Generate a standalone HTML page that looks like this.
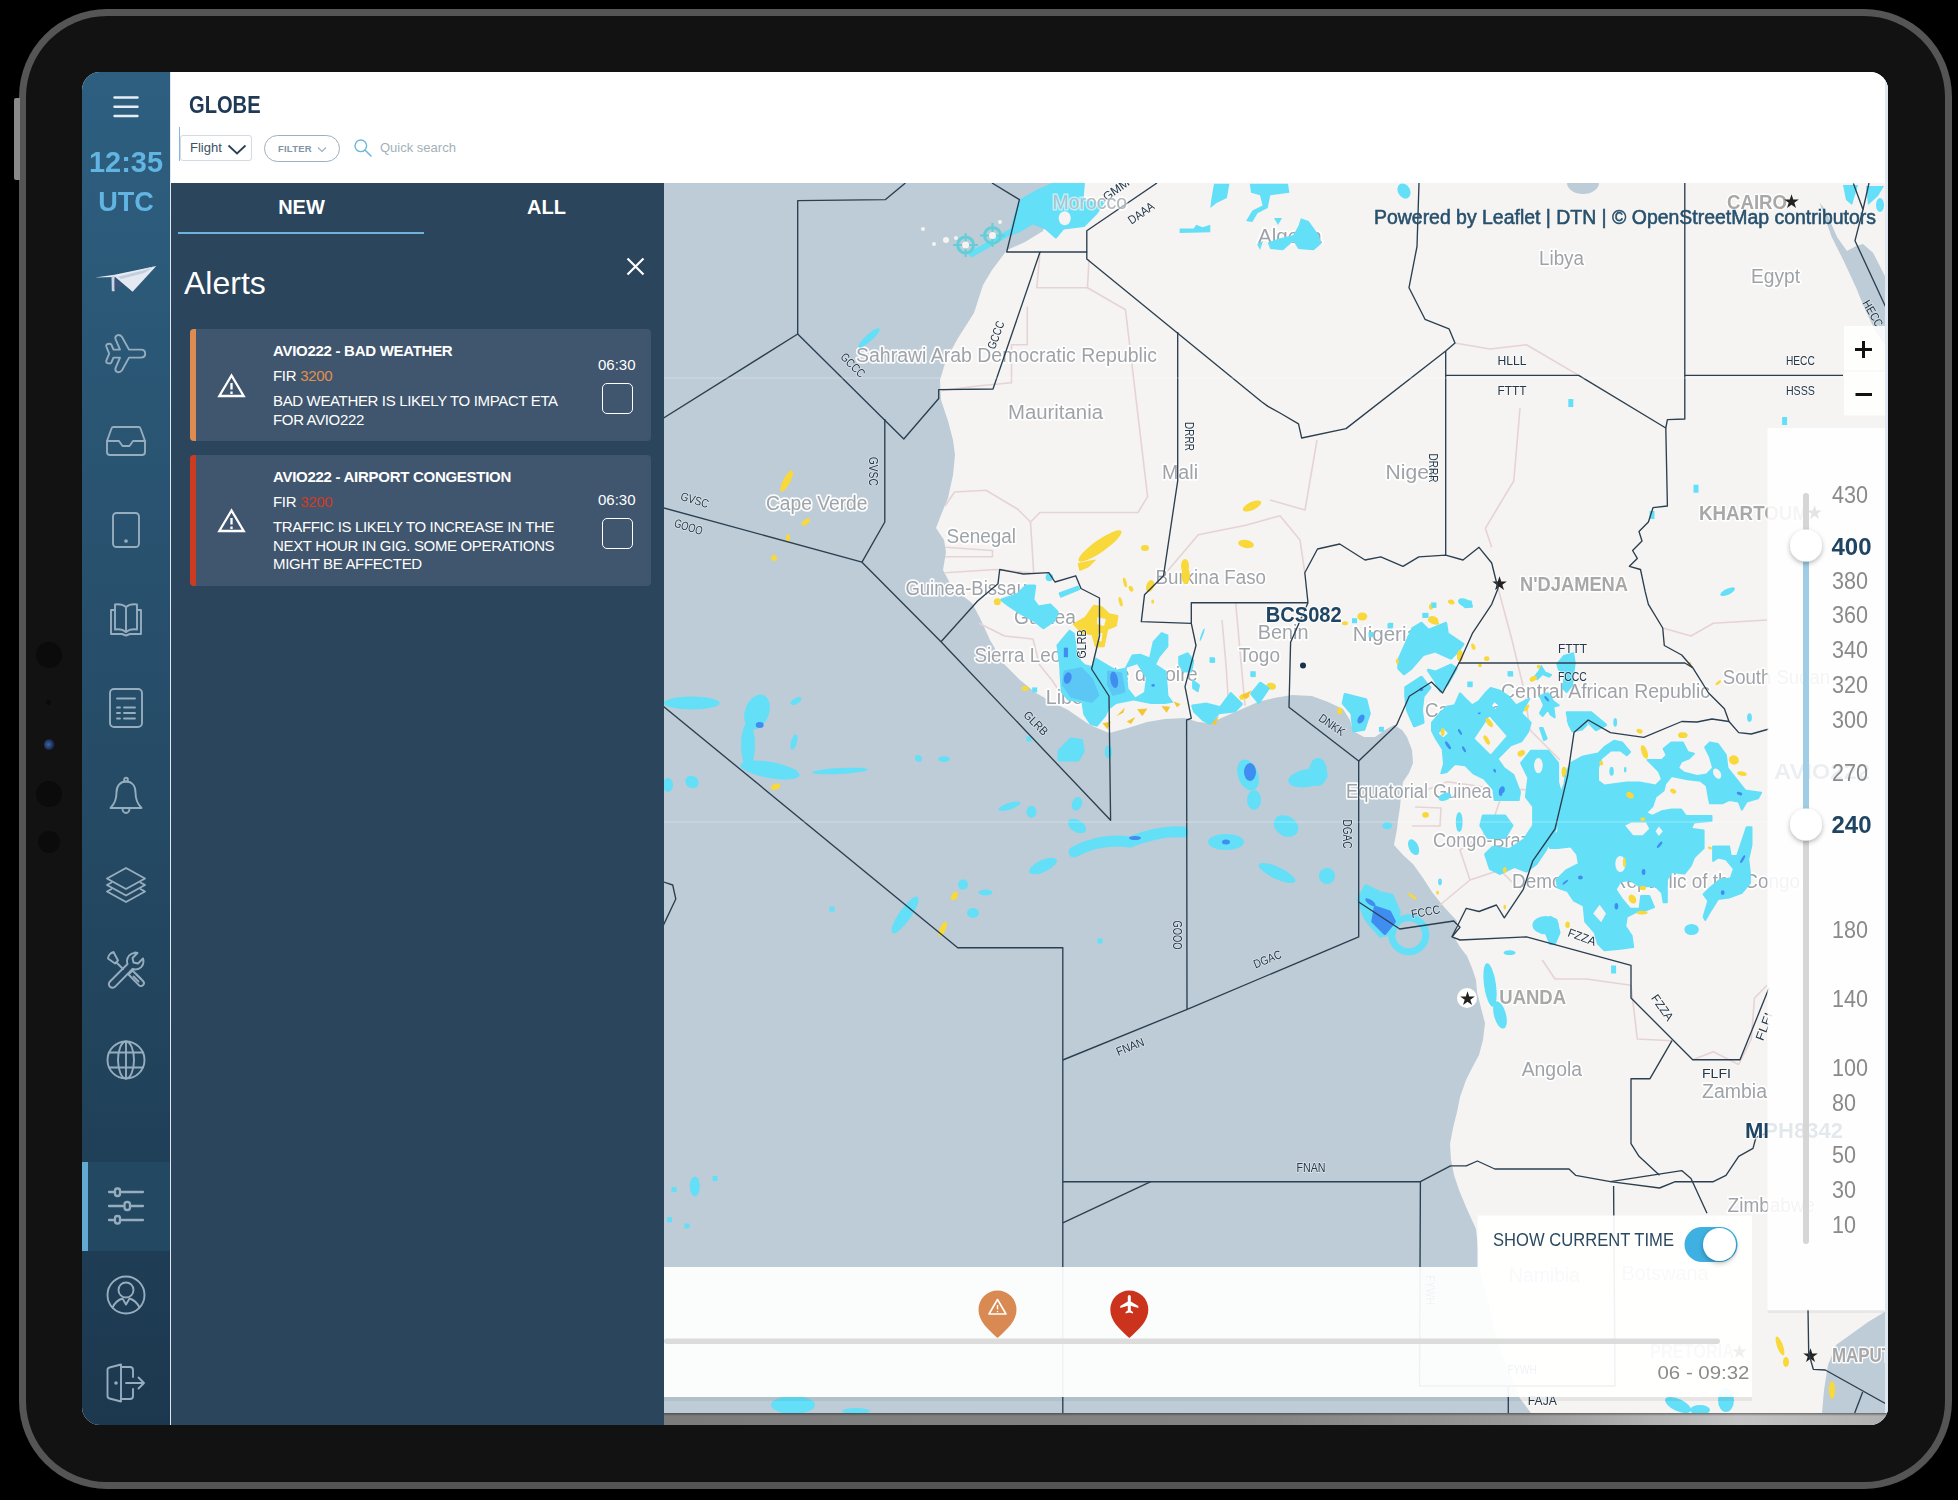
<!DOCTYPE html>
<html lang="en">
<head>
<meta charset="utf-8">
<title>Globe</title>
<style>
*{box-sizing:border-box;margin:0;padding:0}
html,body{width:1958px;height:1500px;background:#000;overflow:hidden;font-family:"Liberation Sans",sans-serif}
#ipad{position:absolute;left:19px;top:9px;width:1933px;height:1480px;border-radius:88px;background:#555}
#ipadin{position:absolute;left:7px;top:7px;right:7px;bottom:7px;border-radius:81px;background:#121212}
.btn{position:absolute;left:14px;width:6px;background:#8a8a8a;border-radius:2px 0 0 2px}
.cam{position:absolute;border-radius:50%;background:#0b0b0b}
#screen{position:absolute;left:82px;top:72px;width:1806px;height:1353px;border-radius:18px;overflow:hidden;background:#fff}
#side{position:absolute;left:0;top:0;width:88px;height:1353px;background:linear-gradient(180deg,#2e5f80 0%,#244862 60%,#1c384f 100%)}
#sideline{position:absolute;left:88px;top:0;width:1.5px;height:1353px;background:#dfe8ef}
#hdr{position:absolute;left:89px;top:0;right:0;height:111px;background:#fff}
#panel{position:absolute;left:89px;top:111px;width:493px;height:1242px;background:#2a455c}
#map{position:absolute;left:582px;top:111px;width:1224px;height:1230px;background:#bdcbd5;overflow:hidden}
#botstrip{position:absolute;left:582px;top:1341px;width:1224px;height:12px;background:linear-gradient(180deg,rgba(40,40,40,.55) 0,rgba(40,40,40,0) 3px),linear-gradient(90deg,#7c7c7c 0%,#858585 50%,#9a9a9a 70%,#c4c4c4 88%,#b0b0b0 100%)}

.ic{position:absolute;left:0;width:88px;display:block}
.ic svg{display:block;margin:0 auto;fill:none;stroke:#96adbe;stroke-width:1.9;stroke-linecap:round;stroke-linejoin:round}
.time{position:absolute;left:0;width:88px;text-align:center;color:#62b4e3;font-weight:bold}
#active{position:absolute;left:0;top:1090px;width:88px;height:89px;background:#234862}
#active:before{content:"";position:absolute;left:0;top:0;width:6px;height:89px;background:#62a9d4}

#hdr .title{position:absolute;left:18px;top:20px;font-size:23px;line-height:26px;font-weight:bold;color:#203a56;transform:scaleX(.875);transform-origin:0 0}
#flight{position:absolute;left:9px;top:63px;width:72px;height:26px;border:1px solid #d3dae0;border-radius:3px;font-size:13px;line-height:24px;color:#3c5166;padding-left:9px}
#filter{position:absolute;left:93px;top:63px;width:76px;height:27px;border:1.3px solid #9fb0bd;border-radius:14px;font-size:9.500px;line-height:25px;color:#8095a5;font-weight:bold;padding-left:13px;letter-spacing:.2px}
#qs{position:absolute;left:209px;top:67px;font-size:13px;line-height:18px;color:#a3b0ba}
#tabs div{position:absolute;top:11px;height:26px;font-size:20px;line-height:26px;font-weight:bold;color:#fff;text-align:center}
#alerts{position:absolute;left:13px;top:80px;font-size:32px;line-height:40px;color:#fff}
.card{position:absolute;left:19px;width:461px;background:#40566e;border-radius:4px;color:#fff;overflow:hidden}
.card .bar{position:absolute;left:0;top:0;bottom:0;width:6px}
.card .t{position:absolute;left:83px;top:13px;font-size:15px;line-height:18px;font-weight:bold;white-space:nowrap;letter-spacing:-0.28px}
.card .f{letter-spacing:-0.3px;position:absolute;left:83px;top:38px;font-size:15px;line-height:18px;white-space:nowrap}
.card .d{letter-spacing:-0.35px;position:absolute;left:83px;top:63px;font-size:15px;line-height:18.500px;white-space:nowrap}
.card .tm{position:absolute;left:408px;font-size:15px;line-height:18px}
.card .cb{position:absolute;left:412px;width:31px;height:31px;border:1.600px solid #fff;border-radius:5px}
</style>
</head>
<body>
<div id="ipad"><div id="ipadin"></div></div>
<div class="btn" style="top:98px;height:82px"></div>
<div class="cam" style="left:36px;top:642px;width:26px;height:26px"></div>
<div class="cam" style="left:46px;top:700px;width:5px;height:5px"></div>
<div class="cam" style="left:44px;top:739px;width:11px;height:11px;background:radial-gradient(circle at 40% 50%,#3b66a8 0%,#1c2f55 55%,#0b0b0b 80%)"></div>
<div class="cam" style="left:36px;top:781px;width:26px;height:26px"></div>
<div class="cam" style="left:38px;top:831px;width:22px;height:22px"></div>
<div id="screen">
<div id="side">
<div id="active"></div>
<svg style="position:absolute;left:31px;top:23px" width="26" height="24" viewBox="0 0 26 24"><g stroke="#e6eef4" stroke-width="2.4" stroke-linecap="round"><line x1="1.5" y1="2.5" x2="24.5" y2="2.5"/><line x1="1.5" y1="11.7" x2="24.5" y2="11.7"/><line x1="1.5" y1="21" x2="24.5" y2="21"/></g></svg>
<div class="time" style="top:73.5px;font-size:30px;line-height:32px;transform:scaleX(.965)">12:35</div>
<div class="time" style="top:112.5px;font-size:28.5px;line-height:32px;transform:scaleX(.95)">UTC</div>
<!-- paper plane logo -->
<svg style="position:absolute;left:12px;top:192px" width="64" height="32" viewBox="0 0 64 32"><polygon points="1,13.600 20.600,10.800 62.300,2 30,11.500 20.600,13" fill="#e9eef5"/><polygon points="17.500,12 20.600,11.500 20.600,27.300 17.800,27.300" fill="#c9d3e3"/><polygon points="20.600,15 30,21.500 20.600,25.500" fill="#3d557c"/><polygon points="20.600,12.600 62.300,2 38.600,27.700" fill="#e4e9f2"/><polygon points="24,12.800 58,4.200 50,9 27,15" fill="#b4c0d6" opacity=".7"/></svg>
<!-- plane -->
<div class="ic" style="top:252px"><svg width="60" height="60" viewBox="0 0 60 60"><path d="M33 25.600L26 13Q24 10.300 21 11.300Q18.800 12.500 19.500 15L24 25.600H17.500L15.500 21Q15 19.500 13 19.800L11 20.200Q9.800 21 10.300 22.500L13.200 29.600L10.300 36.700Q9.800 38.200 11 39L13 39.400Q15 39.700 15.500 38.200L17.500 33.600H24L19.500 44.200Q18.800 46.700 21 47.900Q24 48.900 26 46.200L33 33.600H45Q49.200 33.600 49.200 29.600Q49.200 25.600 45 25.600Z"/></svg></div>
<!-- inbox -->
<div class="ic" style="top:353px"><svg width="42" height="32" viewBox="0 0 42 32"><path d="M2 16l4.500-12.500c.3-.9 1-1.500 2-1.500h25c1 0 1.700.6 2 1.500L40 16v11c0 1.700-1.300 3-3 3H5c-1.700 0-3-1.300-3-3z"/><path d="M2 16h12l3.500 5h7l3.500-5h12"/></svg></div>
<!-- tablet -->
<div class="ic" style="top:439px"><svg width="30" height="38" viewBox="0 0 30 38"><rect x="2" y="2" width="26" height="34" rx="3.500"/><circle cx="15" cy="30" r="0.900" fill="#96adbe"/></svg></div>
<!-- book -->
<div class="ic" style="top:529px"><svg width="36" height="36" viewBox="0 0 36 36"><path d="M18 6c-3-2.500-7-3-11-2.500v25c4-.5 8 0 11 2.500 3-2.500 7-3 11-2.500v-25c-4-.5-8 0-11 2.500z"/><path d="M18 6v25"/><path d="M7 9H3v24h11l4 1.500 4-1.500h11V9h-4"/></svg></div>
<!-- list -->
<div class="ic" style="top:615px"><svg width="36" height="42" viewBox="0 0 36 42"><rect x="2" y="2" width="32" height="38" rx="4"/><path d="M9 11.500h18M9 20.500h3M16 20.500h11M9 26h3M16 26h11M9 31.500h3M16 31.500h11"/></svg></div>
<!-- bell -->
<div class="ic" style="top:704px"><svg width="36" height="40" viewBox="0 0 36 40"><path d="M18 5.500c-6 0-9.500 4.500-9.500 11 0 7-2 11.500-6 15.500h31c-4-4-6-8.500-6-15.500 0-6.500-3.500-11-9.500-11z"/><circle cx="18" cy="3.700" r="1.900"/><path d="M14.500 32.500c0 2.500 1.500 4.500 3.500 4.500s3.500-2 3.500-4.500"/></svg></div>
<!-- layers -->
<div class="ic" style="top:794px"><svg width="42" height="38" viewBox="0 0 42 38"><path d="M21 2L2 12.500 21 23l19-10.500z"/><path d="M6.500 16.500L2 19l19 10.500L40 19l-4.500-2.500"/><path d="M6.500 23L2 25.500 21 36l19-10.500-4.500-2.500"/></svg></div>
<!-- tools -->
<div class="ic" style="top:878px"><svg width="42" height="40" viewBox="0 0 42 40"><path d="M30 3c-4.500 0-8 3.500-8 8 0 1 .2 2 .5 3L5 31.500c-1.500 1.500-1.500 3.800 0 5.200s3.800 1.500 5.200 0L27.500 19c1 .4 2 .500 3 .500 4.500 0 8-3.500 8-8 0-1-.2-2-.5-3l-5 5-4.500-1-1-4.500 5-5c-.8-.3-1.700-.5-2.500-.5z"/><path d="M3 8.500C3 6 5.500 2.500 8.500 2l4.500 8.500-3 3z"/><path d="M11.500 12.500l6.500 6.500"/><path d="M23.500 24.500l4-4 10.500 10.500c1.200 1.200 1.200 3 0 4.200s-3 1.200-4.200 0z"/><path d="M28.500 26.500l5 5M31.500 24.500l4 4"/></svg></div>
<!-- globe -->
<div class="ic" style="top:967px"><svg width="42" height="42" viewBox="0 0 42 42"><circle cx="21" cy="21" r="18.500"/><ellipse cx="21" cy="21" rx="8" ry="18.500"/><path d="M21 2.500v37M4 13.500h34M4 28.500h34"/></svg></div>
<!-- sliders -->
<div class="ic" style="top:1114px"><svg width="38" height="40" viewBox="0 0 38 40"><g stroke-width="2.300"><path d="M2 6h5M14.500 6H36M2 20h14M24.500 20H36M2 34h5M14.500 34H36"/><rect x="8" y="2.500" width="5" height="7.500" rx="2.200"/><rect x="17.500" y="16" width="5.500" height="8" rx="2.500"/><rect x="8" y="30" width="5" height="7.500" rx="2.200"/></g></svg></div>
<!-- user -->
<div class="ic" style="top:1202px"><svg width="42" height="42" viewBox="0 0 42 42"><circle cx="21" cy="21" r="18.500"/><circle cx="21" cy="16" r="7.500"/><path d="M7.500 33.500c2.500-5 6.500-8 10-9l3.500 6 3.500-6c3.500 1 7.500 4 10 9"/></svg></div>
<!-- logout -->
<div class="ic" style="top:1290px"><svg width="42" height="42" viewBox="0 0 42 42"><path d="M16 2.500L4.500 5.500c-1.200.3-2 1.300-2 2.500v26c0 1.200.8 2.200 2 2.500L16 39.500z"/><path d="M16 5h9c1.700 0 3 1.300 3 3v7M28 27v7c0 1.700-1.300 3-3 3h-9"/><path d="M21 21h18M33.500 15.500L39 21l-5.500 5.500"/><circle cx="11" cy="21" r="0.800" fill="#96adbe"/></svg></div>
</div>
<div id="sideline"></div>
<div id="hdr">
<div class="title">GLOBE</div>
<div style="position:absolute;left:8px;top:55px;width:1px;height:34px;background:#8ab4dd"></div>
<div id="flight">Flight<svg style="position:absolute;left:46px;top:8px" width="20" height="11" viewBox="0 0 20 11"><path d="M1.500 1.500L10 9.500 18.500 1.500" fill="none" stroke="#2a4058" stroke-width="1.800"/></svg></div>
<div id="filter">FILTER<svg style="position:absolute;left:52px;top:10px" width="10" height="7" viewBox="0 0 10 7"><path d="M1 1.500L5 5.500 9 1.500" fill="none" stroke="#9fb0bd" stroke-width="1.200"/></svg></div>
<svg style="position:absolute;left:182px;top:66px" width="20" height="20" viewBox="0 0 20 20"><circle cx="7.800" cy="7.800" r="5.800" fill="none" stroke="#6fb6dc" stroke-width="1.400"/><path d="M12 12l6 6" stroke="#6fb6dc" stroke-width="1.500" stroke-linecap="round"/></svg>
<div id="qs">Quick search</div>
</div>
<div id="panel">
<div id="tabs"><div style="left:8px;width:245px">NEW</div><div style="left:253px;width:245px">ALL</div></div>
<div style="position:absolute;left:7px;top:49px;width:246px;height:2px;background:#6fb2dc"></div>
<div id="alerts">Alerts</div>
<svg style="position:absolute;left:455px;top:74px" width="19" height="19" viewBox="0 0 19 19"><path d="M1.500 1.500l16 16M17.500 1.500l-16 16" stroke="#fff" stroke-width="2.200"/></svg>
<div class="card" style="top:146px;height:112px"><div class="bar" style="background:#dc8c52"></div>
<svg style="position:absolute;left:27px;top:44px" width="29" height="25" viewBox="0 0 29 25"><path d="M14.500 2.500L2.300 23h24.400z" fill="none" stroke="#fff" stroke-width="2.300" stroke-linejoin="miter"/><path d="M14.500 10v6.500M14.500 18.500v2.500" stroke="#fff" stroke-width="2.300"/></svg>
<div class="t">AVIO222 - BAD WEATHER</div><div class="f">FIR <span style="color:#e0914f">3200</span></div><div class="d">BAD WEATHER IS LIKELY TO IMPACT ETA<br>FOR AVIO222</div>
<div class="tm" style="top:27px">06:30</div><div class="cb" style="top:54px"></div></div>
<div class="card" style="top:272px;height:131px"><div class="bar" style="background:#cc3a20"></div>
<svg style="position:absolute;left:27px;top:53px" width="29" height="25" viewBox="0 0 29 25"><path d="M14.500 2.500L2.300 23h24.400z" fill="none" stroke="#fff" stroke-width="2.300" stroke-linejoin="miter"/><path d="M14.500 10v6.500M14.500 18.500v2.500" stroke="#fff" stroke-width="2.300"/></svg>
<div class="t">AVIO222 - AIRPORT CONGESTION</div><div class="f">FIR <span style="color:#d23a22">3200</span></div><div class="d">TRAFFIC IS LIKELY TO INCREASE IN THE<br>NEXT HOUR IN GIG. SOME OPERATIONS<br>MIGHT BE AFFECTED</div>
<div class="tm" style="top:36px">06:30</div><div class="cb" style="top:63px"></div></div>
</div>
<div id="map">
<svg width="1224" height="1230" viewBox="664 183 1224 1230" style="position:absolute;left:0;top:0;display:block;filter:blur(.55px)" font-family="Liberation Sans, sans-serif">
<rect x="664" y="183" width="1224" height="1230" fill="#f5f4f2"/>
<polygon fill="#bdccd6" points="664.0,183.0 1053.0,183.0 1050.0,205.0 1043.0,231.0 1025.0,242.0 1007.0,250.0 992.0,270.0 983.0,285.0 974.0,313.0 958.0,338.0 946.0,360.0 940.0,380.0 941.0,400.0 948.0,421.0 953.0,440.0 955.0,455.0 953.0,475.0 948.0,498.0 941.0,515.0 936.0,528.0 944.0,540.0 946.0,552.0 943.0,570.0 950.0,583.0 958.0,592.0 972.0,603.0 980.0,618.0 990.0,640.0 1004.0,664.0 1020.0,680.0 1036.0,693.0 1052.0,702.0 1068.0,710.0 1090.0,725.0 1109.0,733.0 1128.0,728.0 1147.0,722.0 1165.0,719.0 1185.0,718.0 1198.0,722.0 1210.0,723.0 1226.0,716.0 1242.0,709.0 1258.0,702.0 1274.0,698.0 1292.0,695.0 1312.0,696.0 1328.0,702.0 1343.0,709.0 1350.0,720.0 1353.0,731.0 1364.0,737.0 1375.0,737.0 1385.0,730.0 1394.0,725.0 1402.0,730.0 1407.0,737.0 1412.0,750.0 1413.0,763.0 1409.0,773.0 1403.0,782.0 1401.0,795.0 1400.0,807.0 1398.0,820.0 1397.0,829.0 1394.0,845.0 1403.0,855.0 1413.0,864.0 1423.0,878.0 1432.0,892.0 1440.0,902.0 1445.0,908.0 1457.0,921.0 1454.0,937.0 1460.0,947.0 1467.0,956.0 1472.0,968.0 1476.0,980.0 1477.0,992.0 1481.0,1008.0 1485.0,1023.0 1483.0,1040.0 1479.0,1055.0 1472.0,1068.0 1466.0,1080.0 1460.0,1097.0 1457.0,1112.0 1453.0,1128.0 1450.0,1144.0 1451.0,1160.0 1454.0,1175.0 1459.0,1190.0 1466.0,1207.0 1471.0,1218.0 1476.0,1229.0 1478.0,1248.0 1479.0,1267.0 1485.0,1290.0 1492.0,1320.0 1500.0,1350.0 1510.0,1375.0 1519.0,1397.0 1531.0,1413.0 664.0,1413.0"/>
<polygon fill="#bdccd6" points="1819.6,202.5 1831.7,237.0 1844.0,261.5 1856.0,287.5 1866.0,311.7 1875.0,330.0 1888.0,350.0 1888.0,282.0 1873.0,252.8 1863.0,244.0 1856.0,246.0 1847.0,251.0 1837.0,237.0 1825.0,209.5"/>
<polygon fill="#bdccd6" points="1822.0,1413.0 1824.0,1390.0 1828.0,1365.0 1836.0,1345.0 1850.0,1335.0 1868.0,1322.0 1888.0,1310.0 1888.0,1413.0"/>
<ellipse cx="1583" cy="183" rx="16" ry="11" fill="#bdccd6"/>
<circle cx="923" cy="229" r="2" fill="#f5f4f2"/>
<circle cx="934" cy="244" r="2" fill="#f5f4f2"/>
<circle cx="946" cy="240" r="3" fill="#f5f4f2"/>
<circle cx="956" cy="238" r="2" fill="#f5f4f2"/>
<circle cx="1000" cy="222" r="2" fill="#f5f4f2"/>
<g fill="none" stroke="#e6d3d6" stroke-width="1.600" stroke-linejoin="round">
<polyline points="1040.0,252.0 1036.8,287.7 1087.5,287.7 1089.0,259.0"/>
<polyline points="1027.3,306.7 1027.3,344.7 1011.5,344.7 1011.5,382.7 979.8,385.8 941.8,390.6"/>
<polyline points="1087.5,287.7 1125.5,309.8 1147.6,496.7 1138.0,512.5 1040.0,512.5 1030.5,522.0 1017.8,509.3 986.0,490.3 954.5,492.0 945.0,506.0"/>
<polyline points="945.0,547.3 992.5,550.5 992.5,556.8 945.0,556.8"/>
<polyline points="945.0,572.7 995.7,569.5 1030.5,572.7"/>
<polyline points="1030.5,522.0 1033.7,572.7"/>
<polyline points="1163.5,575.8 1198.3,534.7 1245.8,525.2 1280.0,515.7 1300.0,540.0 1304.8,572.7"/>
<polyline points="979.0,623.3 1004.5,636.0 1033.0,639.0 1039.3,664.5 1052.0,680.3 1064.7,699.3"/>
<polyline points="1235.7,602.7 1240.4,655.0 1245.0,705.7"/>
<polyline points="1222.0,620.0 1226.0,664.5 1229.0,712.0"/>
<polyline points="1455.0,343.0 1490.0,349.0 1526.5,344.7 1578.7,375.4"/>
<polyline points="1520.0,408.0 1513.8,480.8 1485.3,528.3 1491.7,547.3"/>
<polyline points="1270.0,500.0 1305.0,510.0 1317.0,440.0"/>
<polyline points="1662.7,628.0 1691.0,636.0 1713.3,623.3 1767.0,620.0"/>
<polyline points="1415.7,794.3 1447.3,781.7 1491.7,788.0 1530.0,790.0"/>
<polyline points="1412.0,826.0 1440.0,826.0 1441.0,808.0 1415.0,807.0"/>
<polyline points="1498.0,588.0 1512.0,640.0 1524.0,690.0 1530.0,730.0 1560.0,760.0"/>
<polyline points="1542.3,960.0 1555.0,979.0 1586.6,979.0 1631.0,985.3 1637.3,1039.0 1672.0,1040.7"/>
<polyline points="1692.7,1059.7 1713.3,1051.8 1738.7,1064.5 1751.3,1039.0 1754.5,998.0 1767.0,985.3"/>
<polyline points="1440.0,905.0 1470.0,880.0 1500.0,870.0 1520.0,890.0"/>
<polyline points="1470.0,880.0 1460.0,850.0 1490.0,830.0 1500.0,800.0"/>
</g>
<g font-size="20" fill="#9fa3a8" stroke="#fff" stroke-width="3.500" stroke-linejoin="round" paint-order="stroke" stroke-opacity=".9">
<text x="1052.6" y="208.5" textLength="74.4" lengthAdjust="spacingAndGlyphs">Morocco</text>
<text x="1258.0" y="242.5" textLength="64.0" lengthAdjust="spacingAndGlyphs">Algeria</text>
<text x="1539.0" y="264.5" textLength="45.0" lengthAdjust="spacingAndGlyphs">Libya</text>
<text x="1751.0" y="282.5" textLength="49.0" lengthAdjust="spacingAndGlyphs">Egypt</text>
<text x="856.0" y="362.2" textLength="301.0" lengthAdjust="spacingAndGlyphs">Sahrawi Arab Democratic Republic</text>
<text x="1008.0" y="419.2" textLength="95.0" lengthAdjust="spacingAndGlyphs">Mauritania</text>
<text x="1162.0" y="478.5" textLength="36.0" lengthAdjust="spacingAndGlyphs">Mali</text>
<text x="1385.6" y="478.5" textLength="50.4" lengthAdjust="spacingAndGlyphs">Niger</text>
<text x="766.0" y="509.5" textLength="101.4" lengthAdjust="spacingAndGlyphs">Cape Verde</text>
<text x="946.6" y="542.5" textLength="69.4" lengthAdjust="spacingAndGlyphs">Senegal</text>
<text x="905.4" y="595.0" textLength="121.6" lengthAdjust="spacingAndGlyphs">Guinea-Bissau</text>
<text x="1155.6" y="583.9" textLength="110.4" lengthAdjust="spacingAndGlyphs">Burkina Faso</text>
<text x="1014.0" y="623.5" textLength="62.0" lengthAdjust="spacingAndGlyphs">Guinea</text>
<text x="974.4" y="661.5" textLength="107.6" lengthAdjust="spacingAndGlyphs">Sierra Leone</text>
<text x="1045.7" y="704.2" textLength="59.3" lengthAdjust="spacingAndGlyphs">Liberia</text>
<text x="1088.0" y="680.5" textLength="109.7" lengthAdjust="spacingAndGlyphs">Côte d'Ivoire</text>
<text x="1257.8" y="639.3" textLength="50.7" lengthAdjust="spacingAndGlyphs">Benin</text>
<text x="1238.8" y="661.5" textLength="41.2" lengthAdjust="spacingAndGlyphs">Togo</text>
<text x="1352.8" y="640.9" textLength="65.2" lengthAdjust="spacingAndGlyphs">Nigeria</text>
<text x="1425.0" y="716.5" textLength="87.0" lengthAdjust="spacingAndGlyphs">Cameroon</text>
<text x="1501.0" y="697.9" textLength="209.0" lengthAdjust="spacingAndGlyphs">Central African Republic</text>
<text x="1722.8" y="683.5" textLength="107.2" lengthAdjust="spacingAndGlyphs">South Sudan</text>
<text x="1346.0" y="797.5" textLength="145.7" lengthAdjust="spacingAndGlyphs">Equatorial Guinea</text>
<text x="1433.0" y="846.5" textLength="147.0" lengthAdjust="spacingAndGlyphs">Congo-Brazzaville</text>
<text x="1512.0" y="887.9" textLength="288.0" lengthAdjust="spacingAndGlyphs">Democratic Republic of the Congo</text>
<text x="1521.7" y="1075.5" textLength="60.3" lengthAdjust="spacingAndGlyphs">Angola</text>
<text x="1702.0" y="1097.9" textLength="65.0" lengthAdjust="spacingAndGlyphs">Zambia</text>
<text x="1727.6" y="1211.9" textLength="87.4" lengthAdjust="spacingAndGlyphs">Zimbabwe</text>
<text x="1509.0" y="1281.5" textLength="71.0" lengthAdjust="spacingAndGlyphs">Namibia</text>
<text x="1621.5" y="1280.0" textLength="87.1" lengthAdjust="spacingAndGlyphs">Botswana</text>
</g>
<g font-size="20" font-weight="bold" fill="#a8a8a8" stroke="#fff" stroke-width="3" stroke-linejoin="round" paint-order="stroke" stroke-opacity=".9">
<text x="1727.0" y="208.7" textLength="60.0" lengthAdjust="spacingAndGlyphs">CAIRO</text>
<text x="1699.0" y="519.5" textLength="109.0" lengthAdjust="spacingAndGlyphs">KHARTOUM</text>
<text x="1520.0" y="590.7" textLength="108.0" lengthAdjust="spacingAndGlyphs">N'DJAMENA</text>
<text x="1488.0" y="1004.4" textLength="78.0" lengthAdjust="spacingAndGlyphs">LUANDA</text>
<text x="1832.0" y="1361.7" textLength="73.0" lengthAdjust="spacingAndGlyphs">MAPUTO</text>
<text x="1650.0" y="1358.0" textLength="84.0" lengthAdjust="spacingAndGlyphs">PRETORIA</text>
</g>
<circle cx="1467" cy="998" r="10" fill="#fff"/>
<g font-size="19" fill="#222">
<text x="1791.0" y="207.5" text-anchor="middle">★</text>
<text x="1814.0" y="518.5" text-anchor="middle">★</text>
<text x="1499.6" y="590.2" text-anchor="middle">★</text>
<text x="1467.0" y="1004.5" text-anchor="middle">★</text>
<text x="1810.7" y="1361.8" text-anchor="middle">★</text>
<text x="1739.0" y="1357.5" text-anchor="middle">★</text>
</g>
<g stroke-linejoin="round">
<polygon points="1398.8,659.8 1412.7,628.6 1421.4,623.3 1428.3,630.3 1445.7,623.3 1447.4,633.8 1463.0,644.2 1457.8,651.1 1450.9,658.1 1435.3,651.1 1423.1,654.6 1410.9,668.5 1404.0,673.7 1398.8,668.5" fill="#64dff8" stroke="#64dff8" stroke-width="3"/>
<polygon points="1428.3,670.2 1435.3,672.0 1450.9,665.0 1456.1,668.5 1447.4,684.1 1440.5,691.0 1435.3,680.6 1431.8,675.4" fill="#64dff8" stroke="#64dff8" stroke-width="3"/>
<polygon points="1405.7,687.6 1421.4,677.2 1426.6,684.1 1430.0,687.6 1423.1,696.3 1421.4,710.2 1423.1,722.3 1414.4,725.8 1407.5,710.2 1405.7,696.3" fill="#64dff8" stroke="#64dff8" stroke-width="3"/>
<rect x="1352.0" y="618.2" width="5" height="5" fill="#64dff8"/>
<rect x="1387.5" y="623.5" width="5" height="5" fill="#64dff8"/>
<rect x="1368.5" y="632.1" width="5" height="5" fill="#64dff8"/>
<rect x="1431.0" y="602.5" width="5" height="5" fill="#64dff8"/>
<rect x="1422.3" y="613.0" width="5" height="5" fill="#64dff8"/>
<rect x="1209.5" y="657.3" width="5" height="5" fill="#64dff8"/>
<rect x="1250.5" y="671.2" width="5" height="5" fill="#64dff8"/>
<rect x="1467.5" y="681.5" width="5" height="5" fill="#64dff8"/>
<rect x="1507.5" y="671.2" width="5" height="5" fill="#64dff8"/>
<rect x="1378.9" y="726.8" width="5" height="5" fill="#64dff8"/>
<ellipse cx="1362.3" cy="616.4" rx="5.0" ry="4.0" fill="#f8d83a"/>
<ellipse cx="1345.0" cy="623.3" rx="3.0" ry="2.0" fill="#f8d83a"/>
<ellipse cx="1185.0" cy="566.0" rx="4.0" ry="7.0" fill="#f8d83a"/>
<ellipse cx="1450.9" cy="601.6" rx="3.0" ry="2.0" fill="#f8d83a"/>
<ellipse cx="1431.0" cy="606.8" rx="2.0" ry="3.0" fill="#f8d83a"/>
<ellipse cx="1433.5" cy="621.6" rx="6.0" ry="2.5" fill="#f8d83a" transform="rotate(20 1433.5 621.6)"/>
<ellipse cx="1272.0" cy="686.7" rx="4.0" ry="3.0" fill="#f8d83a"/>
<ellipse cx="1244.0" cy="696.0" rx="5.0" ry="2.5" fill="#f8d83a" transform="rotate(-20 1244.0 696.0)"/>
<ellipse cx="1339.7" cy="711.0" rx="2.5" ry="3.5" fill="#f8d83a"/>
<ellipse cx="1460.0" cy="655.0" rx="3.0" ry="5.0" fill="#f8d83a"/>
<path fill-rule="evenodd" fill="#64dff8" stroke="#64dff8" stroke-width="2" d="M1432.0 722.7 L1438.7 714.7 L1446.7 706.7 L1454.7 705.3 L1460.0 693.3 L1465.3 698.7 L1472.0 705.3 L1478.7 701.3 L1485.3 693.3 L1490.7 688.0 L1500.0 690.7 L1508.0 696.0 L1516.0 705.3 L1529.3 698.7 L1524.0 708.0 L1521.3 713.3 L1530.7 722.7 L1528.0 732.0 L1521.3 741.3 L1510.7 745.3 L1497.3 758.7 L1504.0 768.0 L1513.3 774.7 L1520.0 792.0 L1518.7 800.0 L1494.7 800.0 L1493.3 789.3 L1484.0 778.7 L1473.3 773.3 L1465.3 765.3 L1454.7 764.0 L1446.7 772.0 L1441.3 773.3 L1444.0 764.0 L1442.7 749.3 L1436.0 738.7 L1432.0 730.7 Z M1473.3 738.7 L1489.3 714.7 L1508.0 736.0 L1490.7 756.0 Z M1437.3 733.3 L1443.3 727.3 L1449.3 733.3 L1443.3 738.7 Z M1494.7 700.7 L1499.3 705.3 L1495.3 710.7 L1490.7 705.3 Z"/>
<polygon points="1557.3,664.0 1564.0,656.0 1573.3,653.3 1574.7,662.7 1572.0,685.3 1566.7,692.0 1562.7,688.0 1565.3,674.7 1558.7,669.3" fill="#64dff8" stroke="#64dff8" stroke-width="2"/>
<polygon points="1541.3,665.3 1545.3,672.0 1552.0,674.7 1549.3,677.3 1542.7,674.7 1537.3,680.0 1534.7,676.0 1538.7,670.7" fill="#64dff8" stroke="#64dff8" stroke-width="1"/>
<polygon points="1540.0,696.0 1548.0,693.3 1553.3,701.3 1558.7,705.3 1553.3,706.7 1554.7,717.3 1550.7,714.7 1548.0,709.3 1542.7,716.0 1540.0,713.3 1544.0,705.3" fill="#64dff8" stroke="#64dff8" stroke-width="2"/>
<polygon points="1540.0,728.0 1542.7,728.0 1546.7,738.7 1544.0,740.0" fill="#64dff8" stroke="#64dff8" stroke-width="2"/>
<polygon points="1460.7,602.7 1470.7,601.3 1472.0,606.7 1465.3,607.3" fill="#64dff8" stroke="#64dff8" stroke-width="2"/>
<rect x="1508.2" y="671.5" width="5" height="5" fill="#64dff8"/>
<rect x="1467.5" y="682.2" width="5" height="5" fill="#64dff8"/>
<rect x="1431.5" y="602.8" width="5" height="5" fill="#64dff8"/>
<rect x="1388.2" y="622.8" width="5" height="5" fill="#64dff8"/>
<rect x="1423.5" y="612.8" width="5" height="5" fill="#64dff8"/>
<ellipse cx="1433.3" cy="620.0" rx="5.3" ry="3.7" fill="#f8d83a" transform="rotate(20 1433.3 620.0)"/>
<ellipse cx="1460.0" cy="657.3" rx="2.9" ry="4.0" fill="#f8d83a"/>
<ellipse cx="1473.3" cy="646.7" rx="1.9" ry="3.3" fill="#f8d83a" transform="rotate(-20 1473.3 646.7)"/>
<ellipse cx="1486.7" cy="658.7" rx="2.7" ry="2.4" fill="#f8d83a"/>
<ellipse cx="1533.3" cy="678.7" rx="4.0" ry="2.4" fill="#f8d83a" transform="rotate(-30 1533.3 678.7)"/>
<ellipse cx="1489.3" cy="722.7" rx="2.4" ry="5.3" fill="#f8d83a" transform="rotate(-35 1489.3 722.7)"/>
<ellipse cx="1486.7" cy="740.0" rx="2.1" ry="5.3" fill="#f8d83a" transform="rotate(-30 1486.7 740.0)"/>
<ellipse cx="1442.7" cy="732.0" rx="1.9" ry="4.0" fill="#f8d83a"/>
<ellipse cx="1521.3" cy="753.3" rx="4.0" ry="2.9" fill="#f8d83a" transform="rotate(-30 1521.3 753.3)"/>
<ellipse cx="1564.0" cy="772.0" rx="2.4" ry="5.3" fill="#f8d83a"/>
<ellipse cx="1480.0" cy="665.3" rx="1.9" ry="1.9" fill="#f8d83a"/>
<ellipse cx="1538.7" cy="666.7" rx="1.9" ry="1.9" fill="#f8d83a"/>
<ellipse cx="1452.0" cy="602.7" rx="2.7" ry="1.9" fill="#f8d83a"/>
<ellipse cx="1397.3" cy="661.3" rx="1.6" ry="2.7" fill="#f8d83a"/>
<ellipse cx="1526.7" cy="708.0" rx="1.6" ry="4.0" fill="#f8d83a" transform="rotate(30 1526.7 708.0)"/>
<ellipse cx="1421.3" cy="689.3" rx="1.9" ry="1.9" fill="#3f8df0"/>
<ellipse cx="1460.0" cy="732.0" rx="1.2" ry="3.3" fill="#3f8df0" transform="rotate(-30 1460.0 732.0)"/>
<ellipse cx="1448.0" cy="745.3" rx="1.5" ry="4.7" fill="#3f8df0" transform="rotate(-35 1448.0 745.3)"/>
<ellipse cx="1464.0" cy="749.3" rx="1.2" ry="3.3" fill="#3f8df0" transform="rotate(-30 1464.0 749.3)"/>
<ellipse cx="1546.7" cy="698.7" rx="1.2" ry="3.3" fill="#3f8df0" transform="rotate(-40 1546.7 698.7)"/>
<ellipse cx="1500.7" cy="792.0" rx="1.9" ry="4.0" fill="#3f8df0"/>
<ellipse cx="1494.7" cy="770.7" rx="1.2" ry="2.0" fill="#3f8df0" transform="rotate(-30 1494.7 770.7)"/>
<ellipse cx="1479.3" cy="713.3" rx="1.6" ry="0.8" fill="#3f8df0" transform="rotate(-20 1479.3 713.3)"/>
<polygon points="1521.6,763.2 1531.2,751.2 1548.0,751.2 1557.6,763.2 1557.6,782.4 1562.4,799.2 1560.0,816.0 1552.8,835.2 1545.6,849.6 1536.0,863.9 1526.4,871.1 1514.4,866.3 1500.0,873.5 1490.4,868.7 1485.6,854.3 1492.8,847.2 1509.6,849.6 1524.0,840.0 1533.6,825.6 1533.6,806.4 1526.4,796.8 1528.8,777.6" fill="#64dff8" stroke="#64dff8" stroke-width="3"/>
<ellipse cx="1538.4" cy="765.6" rx="4.3" ry="7.7" fill="#f5f4f2"/>
<polygon points="1483.2,816.0 1504.8,816.0 1512.0,825.6 1504.8,837.6 1488.0,837.6 1480.8,825.6" fill="#64dff8" stroke="#64dff8" stroke-width="3"/>
<ellipse cx="1459.2" cy="822.0" rx="3.4" ry="10.1" fill="#64dff8"/>
<polygon points="1566.0,772.8 1570.8,763.2 1582.0,756.8 1598.0,753.6 1604.4,747.2 1614.0,740.8 1622.0,742.4 1630.0,752.0 1626.8,755.2 1620.4,750.4 1610.8,750.4 1601.2,758.4 1598.0,768.0 1598.0,780.8 1604.4,785.6 1626.8,782.4 1639.6,782.4 1655.6,785.6 1662.0,779.2 1658.8,771.2 1652.4,764.8 1647.6,760.0 1662.0,760.0 1666.8,755.2 1663.6,748.8 1671.6,742.4 1682.8,742.4 1687.6,752.0 1694.0,753.6 1689.2,758.4 1681.2,761.6 1678.0,768.0 1684.4,772.8 1697.2,776.0 1706.7,774.4 1713.1,768.0 1709.9,756.8 1705.2,747.2 1709.9,742.4 1717.9,744.0 1725.9,755.2 1727.5,768.0 1733.9,776.0 1745.1,790.4 1761.1,792.8 1757.9,798.4 1746.7,801.6 1741.9,809.6 1738.7,801.6 1729.1,800.0 1722.7,803.2 1709.9,803.2 1708.3,795.2 1706.7,785.6 1700.4,780.8 1687.6,779.2 1671.6,776.0 1665.2,784.0 1663.6,790.4 1655.6,796.8 1652.4,806.4 1646.0,812.8 1652.4,816.0 1662.0,811.2 1671.6,809.6 1681.2,809.6 1686.0,816.0 1711.5,816.0 1711.5,820.8 1694.0,822.4 1690.8,828.8 1703.6,830.4 1703.6,848.0 1694.0,857.6 1690.8,865.6 1684.4,873.6 1671.6,872.0 1666.8,879.9 1666.8,902.3 1663.6,902.3 1662.0,892.7 1655.6,886.3 1639.6,886.3 1630.0,879.9 1620.4,881.5 1615.6,889.5 1622.0,899.1 1630.0,908.7 1639.6,908.7 1641.2,895.9 1649.2,895.9 1654.0,907.1 1646.0,910.3 1636.4,911.9 1626.8,916.7 1625.2,926.3 1631.6,935.9 1633.2,947.1 1620.4,948.7 1604.4,950.3 1598.0,943.9 1594.8,932.7 1585.2,921.5 1583.6,905.5 1574.0,900.7 1567.6,891.1 1558.0,887.9 1556.4,879.9 1566.0,870.4 1578.8,864.0 1577.2,854.4 1570.8,846.4 1558.0,848.0 1550.0,848.0 1550.0,838.4 1558.0,832.0 1559.6,816.0 1558.0,800.0 1564.4,784.0" fill="#64dff8" stroke="#64dff8" stroke-width="2"/>
<polygon points="1625.2,825.6 1631.6,822.4 1646.0,822.4 1649.2,828.8 1642.8,835.2 1633.2,835.2" fill="#f5f4f2" />
<ellipse cx="1620.4" cy="864.0" rx="5.1" ry="8.0" fill="#f5f4f2"/>
<polygon points="1658.8,826.4 1662.8,831.2 1658.8,836.0 1655.6,831.2" fill="#f5f4f2" />
<polygon points="1599.6,904.7 1606.0,913.5 1601.2,922.3 1593.2,913.5" fill="#f5f4f2" />
<ellipse cx="1717.1" cy="773.6" rx="3.5" ry="5.6" fill="#f5f4f2" transform="rotate(-30 1717.1 773.6)"/>
<ellipse cx="1611.6" cy="771.2" rx="2.2" ry="4.5" fill="#64dff8"/>
<ellipse cx="1625.2" cy="769.6" rx="1.3" ry="2.9" fill="#64dff8"/>
<polygon points="1713.1,846.4 1729.1,846.4 1730.7,856.0 1737.1,856.0 1746.7,827.2 1751.5,827.2 1751.5,844.8 1748.3,859.2 1749.9,873.6 1749.9,883.1 1741.9,892.7 1729.1,897.5 1717.9,899.1 1709.9,911.9 1705.2,919.9 1703.6,916.7 1708.3,900.7 1703.6,894.3 1709.9,887.9 1719.5,879.9 1730.7,878.3 1733.9,868.8 1725.9,859.2 1717.9,857.6 1713.1,860.8" fill="#64dff8" stroke="#64dff8" stroke-width="2"/>
<ellipse cx="1691.6" cy="929.5" rx="7.2" ry="5.6" fill="#64dff8"/>
<polygon points="1550.0,916.7 1556.4,919.9 1559.6,932.7 1554.8,943.9 1550.0,943.9 1545.2,931.1" fill="#64dff8" stroke="#64dff8" stroke-width="2"/>
<polygon points="1567.6,720.0 1583.6,720.0 1586.8,724.8 1582.0,729.6 1572.4,731.2 1569.2,724.8" fill="#64dff8" stroke="#64dff8" stroke-width="2"/>
<ellipse cx="1644.4" cy="752.0" rx="2.9" ry="7.2" fill="#f8d83a" transform="rotate(-20 1644.4 752.0)"/>
<ellipse cx="1682.8" cy="735.2" rx="4.8" ry="2.9" fill="#f8d83a"/>
<ellipse cx="1733.9" cy="760.0" rx="5.1" ry="4.5" fill="#f8d83a" transform="rotate(30 1733.9 760.0)"/>
<ellipse cx="1741.9" cy="773.6" rx="4.8" ry="2.2" fill="#f8d83a" transform="rotate(10 1741.9 773.6)"/>
<ellipse cx="1673.2" cy="791.2" rx="3.2" ry="2.2" fill="#f8d83a" transform="rotate(30 1673.2 791.2)"/>
<ellipse cx="1630.0" cy="795.2" rx="4.0" ry="2.9" fill="#f8d83a" transform="rotate(30 1630.0 795.2)"/>
<ellipse cx="1632.4" cy="899.1" rx="3.5" ry="4.8" fill="#f8d83a" transform="rotate(-30 1632.4 899.1)"/>
<ellipse cx="1642.8" cy="887.9" rx="3.2" ry="2.2" fill="#f8d83a"/>
<ellipse cx="1624.4" cy="862.4" rx="1.4" ry="4.8" fill="#f8d83a"/>
<ellipse cx="1642.0" cy="912.7" rx="5.6" ry="1.9" fill="#f8d83a"/>
<ellipse cx="1567.6" cy="924.7" rx="2.2" ry="3.2" fill="#f8d83a"/>
<ellipse cx="1564.4" cy="771.2" rx="2.2" ry="4.0" fill="#f8d83a"/>
<ellipse cx="1601.2" cy="763.2" rx="1.9" ry="2.4" fill="#f8d83a"/>
<ellipse cx="1642.8" cy="819.2" rx="2.4" ry="1.9" fill="#f8d83a"/>
<ellipse cx="1639.6" cy="731.2" rx="3.2" ry="2.2" fill="#f8d83a" transform="rotate(20 1639.6 731.2)"/>
<ellipse cx="1709.9" cy="848.0" rx="2.2" ry="1.3" fill="#f8d83a" transform="rotate(20 1709.9 848.0)"/>
<ellipse cx="1659.6" cy="844.8" rx="1.3" ry="4.0" fill="#3f8df0" transform="rotate(40 1659.6 844.8)"/>
<ellipse cx="1643.6" cy="872.0" rx="1.9" ry="2.9" fill="#3f8df0"/>
<ellipse cx="1580.4" cy="877.5" rx="2.4" ry="1.9" fill="#3f8df0"/>
<ellipse cx="1565.2" cy="882.3" rx="1.0" ry="3.5" fill="#3f8df0" transform="rotate(50 1565.2 882.3)"/>
<ellipse cx="1616.4" cy="906.3" rx="1.8" ry="3.2" fill="#3f8df0"/>
<ellipse cx="1742.7" cy="859.2" rx="1.3" ry="4.5" fill="#3f8df0" transform="rotate(30 1742.7 859.2)"/>
<ellipse cx="1722.7" cy="892.7" rx="1.9" ry="2.4" fill="#3f8df0"/>
<ellipse cx="1739.5" cy="793.6" rx="2.9" ry="1.6" fill="#3f8df0" transform="rotate(20 1739.5 793.6)"/>
<ellipse cx="1545.6" cy="925.1" rx="13.2" ry="9.1" fill="#64dff8"/>
<polygon points="1567.2,712.8 1591.2,712.8 1605.6,724.8 1596.0,729.6 1586.4,720.0 1576.8,729.6 1569.6,724.8" fill="#64dff8" stroke="#64dff8" stroke-width="3"/>
<ellipse cx="1444.8" cy="796.8" rx="6.7" ry="3.8" fill="#64dff8" transform="rotate(-20 1444.8 796.8)"/>
<ellipse cx="1387.2" cy="825.6" rx="4.8" ry="3.6" fill="#64dff8"/>
<ellipse cx="1413.6" cy="847.2" rx="4.8" ry="8.4" fill="#64dff8" transform="rotate(-25 1413.6 847.2)"/>
<ellipse cx="1749.5" cy="717.6" rx="2.4" ry="4.3" fill="#64dff8"/>
<ellipse cx="1615.2" cy="722.4" rx="1.9" ry="4.3" fill="#64dff8"/>
<ellipse cx="1509.6" cy="952.7" rx="6.0" ry="2.4" fill="#64dff8"/>
<ellipse cx="1440.0" cy="881.9" rx="1.9" ry="3.4" fill="#64dff8"/>
<ellipse cx="1502.4" cy="789.6" rx="2.4" ry="3.4" fill="#3f8df0"/>
<ellipse cx="1425.6" cy="814.8" rx="3.4" ry="2.9" fill="#f8d83a"/>
<ellipse cx="1682.3" cy="734.4" rx="3.4" ry="1.4" fill="#f8d83a" transform="rotate(20 1682.3 734.4)"/>
<ellipse cx="1639.1" cy="730.8" rx="2.4" ry="1.9" fill="#f8d83a"/>
<ellipse cx="1718.3" cy="682.8" rx="3.4" ry="1.4" fill="#f8d83a" transform="rotate(-40 1718.3 682.8)"/>
<ellipse cx="1689.5" cy="663.6" rx="1.9" ry="1.9" fill="#f8d83a"/>
<ellipse cx="1412.4" cy="896.3" rx="1.4" ry="5.3" fill="#f8d83a" transform="rotate(-50 1412.4 896.3)"/>
<ellipse cx="1504.8" cy="869.9" rx="1.9" ry="2.9" fill="#f8d83a"/>
<ellipse cx="1504.8" cy="907.1" rx="1.4" ry="2.4" fill="#f8d83a"/>
<ellipse cx="1437.6" cy="892.7" rx="1.4" ry="1.9" fill="#f8d83a"/>
<ellipse cx="1567.2" cy="925.1" rx="1.9" ry="1.9" fill="#f8d83a"/>
<polygon points="1380.0,892.7 1392.0,895.1 1399.2,911.9 1394.4,933.5 1380.0,935.9 1365.6,919.1 1358.4,899.9 1365.6,885.5" fill="#64dff8" stroke="#64dff8" stroke-width="3"/>
<ellipse cx="1408.8" cy="934.7" rx="17" ry="17" fill="none" stroke="#64dff8" stroke-width="7"/>
<polygon points="1375.2,907.1 1389.6,911.9 1394.4,921.5 1384.8,933.5 1372.8,921.5" fill="#3f8df0" stroke="#3f8df0" stroke-width="3"/>
<ellipse cx="1370.4" cy="902.3" rx="6.0" ry="2.4" fill="#3f8df0" transform="rotate(35 1370.4 902.3)"/>
</g>
<g>
<polygon points="1020.0,200.4 1038.0,190.2 1053.0,183.8 1083.9,183.8 1082.6,197.9 1094.0,203.0 1104.3,201.7 1096.6,213.2 1083.9,226.0 1063.4,228.5 1055.8,237.5 1045.6,228.5 1032.8,223.4 1020.0,231.0 1009.8,235.0 1015.0,215.7" fill="#64dff8" stroke="#64dff8" stroke-width="2" stroke-linejoin="round"/>
<ellipse cx="1064.7" cy="218.3" rx="6.0" ry="7.0" fill="#f5f4f2"/>
<path d="M1012 231L972 254" stroke="#64dff8" stroke-width="6" stroke-linecap="round"/>
<circle cx="965.600" cy="245" r="8" fill="none" stroke="#62cfd8" stroke-width="3"/><circle cx="992.500" cy="235.400" r="8" fill="none" stroke="#62cfd8" stroke-width="3"/>
<path d="M953 245h25M965.600 233v24M980 235.400h25M992.500 223v24" stroke="#62cfd8" stroke-width="2"/>
<ellipse cx="965.6" cy="245.0" rx="3.5" ry="3.5" fill="#f5f4f2"/>
<ellipse cx="992.5" cy="235.4" rx="3.5" ry="3.5" fill="#f5f4f2"/>
<polygon points="1214.0,183.8 1229.4,183.8 1226.9,197.9 1216.6,203.0 1210.3,208.0 1211.5,197.9" fill="#64dff8" />
<polygon points="1249.8,183.8 1288.0,183.8 1289.4,192.8 1270.3,195.3 1267.7,208.0 1257.5,213.2 1252.4,222.0 1246.0,220.9 1252.4,210.6 1262.6,205.5 1260.0,195.3 1251.0,192.8" fill="#64dff8" />
<polygon points="1179.6,228.5 1193.7,228.5 1196.2,224.7 1202.6,227.2 1210.3,224.7 1210.3,232.3 1179.6,232.9" fill="#64dff8" />
<polygon points="1300.9,218.3 1308.6,220.9 1318.8,234.9 1321.3,243.8 1313.7,250.2 1298.4,249.0 1293.3,241.3 1283.0,250.2 1270.3,249.0 1267.7,242.6 1278.0,238.7 1293.3,234.9 1298.4,226.0" fill="#64dff8" />
<polygon points="1274.0,218.0 1282.0,218.0 1278.0,225.0" fill="#64dff8" />
<polygon points="1257.0,244.0 1263.0,241.0 1260.0,250.0" fill="#64dff8" />
<ellipse cx="1404.0" cy="191.0" rx="6.0" ry="8.0" fill="#64dff8" transform="rotate(-30 1404.0 191.0)"/>
<ellipse cx="869.0" cy="338.0" rx="14.0" ry="3.5" fill="#64dff8" transform="rotate(-42 869.0 338.0)"/>
<rect x="1568.3" y="399.0" width="5" height="8" fill="#64dff8"/>
<rect x="1782.1" y="417.0" width="5" height="8" fill="#64dff8"/>
<rect x="1693.5" y="484.7" width="5" height="8" fill="#64dff8"/>
<rect x="1649.5" y="511.0" width="5" height="8" fill="#64dff8"/>
<rect x="1611.1" y="965.5" width="5" height="8" fill="#64dff8"/>
<ellipse cx="1727.6" cy="591.7" rx="8.0" ry="3.0" fill="#64dff8" transform="rotate(-25 1727.6 591.7)"/>
<ellipse cx="1464.7" cy="602.7" rx="7.0" ry="4.0" fill="#64dff8" transform="rotate(20 1464.7 602.7)"/>
<polygon points="1001.7,599.9 1017.3,594.7 1026.0,586.0 1034.7,586.0 1032.9,599.9 1038.1,606.9 1050.3,605.1 1057.2,612.1 1053.8,620.8 1043.3,627.7 1034.7,620.8 1019.0,612.1 1008.6,605.1" fill="#64dff8" stroke="#64dff8" stroke-width="3" stroke-linejoin="round"/>
<polygon points="1059.0,593.0 1078.1,586.0 1079.8,589.5 1060.7,597.3" fill="#64dff8" stroke="#64dff8" stroke-width="1" stroke-linejoin="round"/>
<ellipse cx="1049.4" cy="577.4" rx="3.8" ry="3.8" fill="#64dff8"/>
<polygon points="1072.9,624.2 1085.0,617.3 1093.7,605.1 1102.4,606.9 1109.3,613.8 1118.0,615.6 1116.3,626.0 1107.6,629.5 1104.1,646.8 1095.4,646.8 1092.0,634.7 1081.5,632.9" fill="#f8d83a" stroke="#f8d83a" stroke-width="1" stroke-linejoin="round"/>
<polygon points="1097.2,617.3 1105.9,619.0 1104.1,626.0 1097.2,624.2" fill="#f5f4f2" />
<polygon points="1098.9,632.9 1102.4,632.9 1101.5,641.6 1098.0,640.7" fill="#f5f4f2" />
<polygon points="1078.1,563.5 1095.4,560.0 1088.5,566.9 1079.8,570.4" fill="#f8d83a" stroke="#f8d83a" stroke-width="1" stroke-linejoin="round"/>
<ellipse cx="1125.0" cy="582.6" rx="1.7" ry="4.9" fill="#f8d83a" transform="rotate(-15 1125.0 582.6)"/>
<ellipse cx="1120.6" cy="601.7" rx="1.7" ry="4.9" fill="#f8d83a" transform="rotate(-15 1120.6 601.7)"/>
<ellipse cx="1150.1" cy="586.0" rx="3.8" ry="6.1" fill="#f8d83a" transform="rotate(20 1150.1 586.0)"/>
<ellipse cx="997.3" cy="601.7" rx="3.5" ry="3.5" fill="#f8d83a"/>
<ellipse cx="1025.1" cy="688.5" rx="3.5" ry="2.4" fill="#f8d83a"/>
<ellipse cx="1270.8" cy="685.9" rx="4.3" ry="3.1" fill="#f8d83a"/>
<ellipse cx="1244.8" cy="697.2" rx="5.2" ry="1.7" fill="#f8d83a" transform="rotate(-20 1244.8 697.2)"/>
<ellipse cx="1185.7" cy="575.6" rx="4.3" ry="8.7" fill="#f8d83a"/>
<ellipse cx="1131.0" cy="588.7" rx="2.1" ry="3.1" fill="#f8d83a" transform="rotate(-30 1131.0 588.7)"/>
<ellipse cx="1152.7" cy="601.7" rx="1.4" ry="2.1" fill="#f8d83a"/>
<path fill-rule="evenodd" fill="#64dff8" d="M1056.4 645.1 L1069.4 629.5 L1074.6 632.9 L1078.1 657.2 L1085.0 664.2 L1092.0 665.9 L1095.4 657.2 L1104.1 662.4 L1116.3 669.4 L1125.0 667.7 L1131.9 654.6 L1140.6 653.8 L1149.3 657.2 L1152.7 641.6 L1161.4 632.1 L1168.4 634.7 L1168.4 646.8 L1159.7 657.2 L1156.2 664.2 L1166.6 671.1 L1168.4 695.4 L1173.6 702.4 L1164.9 704.1 L1151.0 704.1 L1133.6 700.6 L1116.3 704.1 L1109.3 709.3 L1105.9 716.3 L1097.2 726.7 L1090.2 725.0 L1083.3 714.5 L1081.5 702.4 L1067.7 700.6 L1060.7 692.0 L1059.0 664.2 Z M1126.7 667.7 L1137.1 664.2 L1145.8 678.1 L1144.1 692.0 L1135.4 697.2 L1128.4 688.5 Z"/>
<polygon points="1064.2,671.1 1081.5,667.7 1092.0,678.1 1098.9,695.4 1092.0,702.4 1071.1,697.2 1062.4,685.0" fill="#5cc6f4" stroke="#5cc6f4" stroke-width="1" stroke-linejoin="round"/>
<polygon points="1107.6,671.1 1121.5,672.9 1125.0,692.0 1112.8,695.4 1107.6,685.0" fill="#5cc6f4" stroke="#5cc6f4" stroke-width="1" stroke-linejoin="round"/>
<polygon points="1063.8,647.7 1068.0,647.7 1068.0,657.2 1063.8,657.2" fill="#3f8df0" />
<ellipse cx="1067.7" cy="678.1" rx="3.8" ry="5.9" fill="#3f8df0" transform="rotate(15 1067.7 678.1)"/>
<ellipse cx="1114.2" cy="679.8" rx="3.8" ry="8.3" fill="#3f8df0" transform="rotate(-10 1114.2 679.8)"/>
<ellipse cx="1153.1" cy="685.4" rx="1.7" ry="1.4" fill="#3f8df0"/>
<polygon points="1102.4,723.2 1111.1,721.5 1107.6,729.3" fill="#f6c534" />
<polygon points="1116.3,716.3 1125.0,707.6 1123.2,712.8" fill="#f6c534" />
<polygon points="1126.7,721.5 1135.4,717.1 1131.0,724.1" fill="#f6c534" />
<polygon points="1137.1,709.3 1147.5,708.5 1142.3,716.3" fill="#f6c534" />
<polygon points="1161.4,705.9 1170.1,706.7 1166.6,712.8" fill="#f6c534" />
<polygon points="1173.6,701.5 1180.5,704.1 1177.1,707.6" fill="#f6c534" />
<polygon points="1241.3,695.4 1251.7,690.2 1246.5,698.9" fill="#f6c534" />
<polygon points="1210.0,723.2 1218.7,716.3 1215.3,725.0" fill="#f6c534" />
<polygon points="1192.7,705.9 1206.6,704.1 1220.5,707.6 1230.9,693.7 1241.3,704.1 1234.4,711.1 1218.7,712.8 1210.0,723.2 1203.1,719.7 1194.4,711.1" fill="#64dff8" stroke="#64dff8" stroke-width="3" stroke-linejoin="round"/>
<polygon points="1251.7,693.7 1260.4,683.3 1268.2,688.5 1258.7,702.4" fill="#64dff8" stroke="#64dff8" stroke-width="3" stroke-linejoin="round"/>
<polygon points="1179.7,657.2 1187.5,653.8 1192.7,660.7 1190.9,671.1 1184.0,671.1 1179.7,664.2" fill="#64dff8" stroke="#64dff8" stroke-width="3" stroke-linejoin="round"/>
<polygon points="1192.7,679.8 1199.6,685.0 1197.9,692.0 1192.7,688.5" fill="#64dff8" stroke="#64dff8" stroke-width="1" stroke-linejoin="round"/>
<ellipse cx="1202.2" cy="634.7" rx="1.0" ry="6.9" fill="#64dff8" transform="rotate(20 1202.2 634.7)"/>
<polygon points="1059.0,751.0 1071.1,738.9 1081.5,740.6 1083.3,751.0 1078.1,760.0 1059.0,760.0" fill="#64dff8" stroke="#64dff8" stroke-width="3" stroke-linejoin="round"/>
<ellipse cx="1108.5" cy="751.9" rx="3.8" ry="6.6" fill="#64dff8"/>
<rect x="1210.1" y="657.9" width="5" height="5" fill="#64dff8"/>
<rect x="1250.6" y="672.1" width="5" height="5" fill="#64dff8"/>
<rect x="1032.2" y="687.4" width="5" height="5" fill="#64dff8"/>
<polygon points="1345.0,694.5 1365.8,699.7 1369.3,713.6 1364.0,729.3 1353.6,731.0 1351.9,713.6 1343.2,703.2" fill="#64dff8" stroke="#64dff8" stroke-width="3" stroke-linejoin="round"/>
<ellipse cx="1361.0" cy="719.0" rx="3.0" ry="5.0" fill="#3f8df0" transform="rotate(30 1361.0 719.0)"/>
<ellipse cx="944.0" cy="759.0" rx="6.0" ry="3.0" fill="#64dff8"/>
<ellipse cx="919.0" cy="759.0" rx="3.0" ry="3.0" fill="#64dff8"/>
<ellipse cx="1248.0" cy="775.0" rx="10.0" ry="16.0" fill="#64dff8" transform="rotate(-20 1248.0 775.0)"/>
<ellipse cx="1254.0" cy="800.0" rx="7.0" ry="10.0" fill="#64dff8"/>
<ellipse cx="1308.0" cy="778.0" rx="20.0" ry="9.0" fill="#64dff8" transform="rotate(-10 1308.0 778.0)"/>
<ellipse cx="1318.0" cy="772.0" rx="9.0" ry="14.0" fill="#64dff8"/>
<ellipse cx="1286.0" cy="826.0" rx="13.0" ry="10.0" fill="#64dff8" transform="rotate(30 1286.0 826.0)"/>
<ellipse cx="1226.0" cy="842.0" rx="18.0" ry="8.0" fill="#64dff8"/>
<ellipse cx="1077.0" cy="826.0" rx="10.0" ry="6.0" fill="#64dff8" transform="rotate(30 1077.0 826.0)"/>
<ellipse cx="1043.0" cy="866.0" rx="15.0" ry="6.0" fill="#64dff8" transform="rotate(-25 1043.0 866.0)"/>
<ellipse cx="1277.0" cy="873.0" rx="20.0" ry="6.0" fill="#64dff8" transform="rotate(25 1277.0 873.0)"/>
<ellipse cx="1327.0" cy="876.0" rx="8.0" ry="8.0" fill="#64dff8"/>
<ellipse cx="963.0" cy="884.6" rx="5.0" ry="5.0" fill="#64dff8"/>
<ellipse cx="985.5" cy="892.5" rx="7.0" ry="3.0" fill="#64dff8"/>
<ellipse cx="973.0" cy="913.0" rx="6.0" ry="5.0" fill="#64dff8"/>
<ellipse cx="1010.8" cy="805.4" rx="10.0" ry="3.0" fill="#64dff8" transform="rotate(-15 1010.8 805.4)"/>
<ellipse cx="1031.4" cy="811.7" rx="5.0" ry="6.0" fill="#64dff8"/>
<ellipse cx="1077.0" cy="803.8" rx="5.0" ry="7.0" fill="#64dff8" transform="rotate(20 1077.0 803.8)"/>
<ellipse cx="691.7" cy="703.0" rx="28.0" ry="6.5" fill="#64dff8"/>
<ellipse cx="757.0" cy="712.0" rx="12.0" ry="18.0" fill="#64dff8" transform="rotate(20 757.0 712.0)"/>
<ellipse cx="748.0" cy="745.0" rx="7.0" ry="22.0" fill="#64dff8"/>
<ellipse cx="770.0" cy="770.0" rx="30.0" ry="8.0" fill="#64dff8" transform="rotate(10 770.0 770.0)"/>
<ellipse cx="840.0" cy="771.0" rx="28.0" ry="3.0" fill="#64dff8" transform="rotate(-3 840.0 771.0)"/>
<ellipse cx="796.0" cy="701.0" rx="6.0" ry="3.0" fill="#64dff8" transform="rotate(-30 796.0 701.0)"/>
<ellipse cx="794.0" cy="742.0" rx="3.0" ry="8.0" fill="#64dff8" transform="rotate(15 794.0 742.0)"/>
<ellipse cx="692.0" cy="782.0" rx="7.0" ry="6.0" fill="#64dff8" transform="rotate(30 692.0 782.0)"/>
<ellipse cx="668.0" cy="785.0" rx="5.0" ry="7.0" fill="#64dff8"/>
<ellipse cx="918.0" cy="758.0" rx="3.0" ry="3.0" fill="#64dff8"/>
<ellipse cx="1008.0" cy="807.0" rx="10.0" ry="3.0" fill="#64dff8" transform="rotate(-15 1008.0 807.0)"/>
<ellipse cx="905.0" cy="915.0" rx="6.0" ry="22.0" fill="#64dff8" transform="rotate(35 905.0 915.0)"/>
<ellipse cx="694.8" cy="1186.4" rx="5.0" ry="10.0" fill="#64dff8"/>
<path d="M1074 852 Q1100 838 1130 842 Q1160 830 1183 832" fill="none" stroke="#64dff8" stroke-width="11" stroke-linecap="round"/>
<rect x="671.5" y="1187.1" width="5" height="5" fill="#64dff8"/>
<rect x="712.5" y="1176.0" width="5" height="5" fill="#64dff8"/>
<rect x="667.0" y="1217.2" width="5" height="5" fill="#64dff8"/>
<rect x="684.5" y="1223.5" width="5" height="5" fill="#64dff8"/>
<rect x="1026.5" y="736.5" width="5" height="5" fill="#64dff8"/>
<rect x="1097.5" y="938.5" width="5" height="5" fill="#64dff8"/>
<rect x="829.5" y="906.5" width="5" height="5" fill="#64dff8"/>
<ellipse cx="759.7" cy="725.0" rx="4.0" ry="3.0" fill="#3f8df0"/>
<ellipse cx="1250.0" cy="772.0" rx="6.0" ry="9.0" fill="#3f8df0"/>
<ellipse cx="1226.0" cy="842.0" rx="4.0" ry="2.5" fill="#3f8df0"/>
<ellipse cx="1135.0" cy="838.0" rx="6.0" ry="2.0" fill="#3f8df0"/>
<ellipse cx="1490.0" cy="985.0" rx="6.0" ry="22.0" fill="#64dff8" transform="rotate(-8 1490.0 985.0)"/>
<ellipse cx="1500.0" cy="1015.0" rx="6.0" ry="14.0" fill="#64dff8" transform="rotate(-15 1500.0 1015.0)"/>
<ellipse cx="1678.0" cy="1405.0" rx="14.0" ry="6.0" fill="#64dff8" transform="rotate(25 1678.0 1405.0)"/>
<ellipse cx="1726.0" cy="1400.0" rx="8.0" ry="12.0" fill="#64dff8"/>
<ellipse cx="1700.0" cy="1410.0" rx="10.0" ry="5.0" fill="#64dff8"/>
<ellipse cx="793.0" cy="1405.0" rx="22.0" ry="9.0" fill="#64dff8"/>
<ellipse cx="856.0" cy="1411.0" rx="14.0" ry="3.0" fill="#64dff8"/>
<ellipse cx="786.7" cy="481.0" rx="3.5" ry="12.0" fill="#f8d83a" transform="rotate(28 786.7 481.0)"/>
<ellipse cx="805.7" cy="522.0" rx="5.0" ry="2.5" fill="#f8d83a" transform="rotate(-35 805.7 522.0)"/>
<ellipse cx="788.0" cy="538.0" rx="2.0" ry="4.0" fill="#f8d83a"/>
<ellipse cx="774.0" cy="558.0" rx="3.0" ry="3.0" fill="#f8d83a"/>
<ellipse cx="1252.0" cy="506.0" rx="10.0" ry="4.0" fill="#f8d83a" transform="rotate(-25 1252.0 506.0)"/>
<ellipse cx="1246.0" cy="544.0" rx="8.0" ry="4.0" fill="#f8d83a" transform="rotate(10 1246.0 544.0)"/>
<ellipse cx="1100.0" cy="546.0" rx="26.0" ry="6.0" fill="#f8d83a" transform="rotate(-35 1100.0 546.0)"/>
<ellipse cx="942.7" cy="929.0" rx="3.0" ry="8.0" fill="#f8d83a" transform="rotate(25 942.7 929.0)"/>
<ellipse cx="954.5" cy="896.0" rx="3.0" ry="5.0" fill="#f8d83a" transform="rotate(30 954.5 896.0)"/>
<ellipse cx="775.6" cy="786.8" rx="5.0" ry="3.0" fill="#f8d83a" transform="rotate(-20 775.6 786.8)"/>
<ellipse cx="1145.0" cy="548.0" rx="4.0" ry="3.0" fill="#f8d83a"/>
<ellipse cx="1780.0" cy="1346.0" rx="3.0" ry="10.0" fill="#f8d83a" transform="rotate(-20 1780.0 1346.0)"/>
<ellipse cx="1786.0" cy="1362.0" rx="3.0" ry="5.0" fill="#f8d83a"/>
<ellipse cx="1832.0" cy="1390.0" rx="3.0" ry="9.0" fill="#f8d83a"/>
<polygon points="1843.0,185.0 1858.0,185.0 1852.0,205.0 1846.0,200.0" fill="#64dff8" />
<polygon points="1866.0,186.0 1884.0,186.0 1878.0,196.0 1868.0,205.0" fill="#64dff8" />
<ellipse cx="1880.0" cy="205.0" rx="4.0" ry="7.0" fill="#64dff8"/>
</g>
<g fill="none" stroke="#2b3f50" stroke-width="1.35" stroke-linejoin="round">
<polyline points="905.4,183.0 885.5,199.6 797.7,200.6 797.7,334.0 663.0,418.4"/>
<polyline points="797.7,334.0 903.8,439.0 938.7,398.5 938.7,389.6 993.0,389.0 1040.0,252.0 1006.7,252.0 1019.4,199.6 992.0,183.0"/>
<polyline points="1040.0,252.0 1086.8,252.0 1086.8,230.7 1157.0,183.0"/>
<polyline points="1086.8,252.0 1086.8,259.0 1261.6,401.7 1268.0,406.4 1280.0,413.0 1298.5,423.8 1301.7,438.0 1346.0,428.6 1445.7,351.0 1455.0,343.0 1449.0,328.8 1425.0,319.3 1409.0,287.7 1417.0,246.5 1419.0,183.0"/>
<polyline points="884.8,419.0 884.8,522.0 862.0,562.2 663.0,507.7"/>
<polyline points="862.0,562.2 941.0,641.7 1110.6,820.3 1109.0,696.0 1091.6,669.0 1099.5,636.0 1099.5,598.0 1081.0,588.5 1075.7,575.8 1055.0,582.0 1048.8,572.7 1023.5,574.0 999.7,569.5 998.0,583.7 977.6,601.0 941.0,641.7"/>
<polyline points="1177.7,332.0 1177.7,480.8 1163.5,575.8 1144.5,594.8 1141.3,621.7 1191.3,623.3 1191.3,602.7 1308.0,602.7"/>
<polyline points="1191.3,623.3 1196.0,645.5 1185.0,686.7 1191.3,718.3 1186.6,720.0 1187.0,1009.0"/>
<polyline points="1308.0,602.7 1304.8,572.7 1317.5,549.0 1339.7,544.0 1365.0,560.0 1380.8,556.8 1403.0,566.3 1418.8,556.8 1445.7,555.2 1463.0,560.0 1479.0,547.3 1491.7,563.0 1498.0,588.5 1491.7,604.3 1472.7,632.8 1460.0,661.3 1442.6,693.0 1431.5,682.0 1409.3,696.2 1396.7,724.7 1358.7,761.0 1289.0,707.2 1290.6,642.3 1308.0,602.7"/>
<polyline points="1358.7,761.0 1358.7,936.8 1186.6,1009.6 1062.8,1060.0"/>
<polyline points="1358.7,902.0 1399.8,929.0 1453.7,921.0 1460.0,927.3 1452.0,936.8 1460.0,940.0 1526.5,936.8 1631.0,965.3 1631.0,998.0 1692.7,1059.7 1740.0,1059.7 1769.0,988.0"/>
<polyline points="1672.0,1040.7 1650.0,1078.7 1631.0,1078.7 1631.0,1143.7 1639.0,1156.3 1659.5,1175.3"/>
<polyline points="1062.8,1181.7 1420.4,1181.7 1450.5,1165.8 1466.3,1165.8 1477.4,1161.0 1494.8,1169.0 1569.0,1169.0 1575.6,1175.3 1610.4,1181.7 1681.7,1170.6 1691.0,1178.5 1707.0,1213.3"/>
<polyline points="1610.4,1181.7 1659.5,1188.0 1675.3,1181.7 1713.3,1181.7 1726.0,1175.3 1738.7,1156.3 1753.0,1148.4 1756.0,1137.3 1769.0,1132.0"/>
<polyline points="1420.4,1181.7 1419.5,1386.0 1615.0,1386.0 1613.6,1186.0"/>
<polyline points="1508.3,1386.0 1508.3,1413.0"/>
<polyline points="663.0,706.0 957.7,947.7 1062.8,947.7 1062.8,1413.0"/>
<polyline points="1062.8,1222.8 1150.8,1181.7"/>
<polyline points="663.0,881.8 672.7,885.0 675.8,899.0 663.0,926.0"/>
<polyline points="1445.7,351.0 1445.7,555.2"/>
<polyline points="1445.7,375.4 1578.7,375.4 1665.8,428.0 1667.4,419.7 1684.8,419.0 1684.8,183.0"/>
<polyline points="1684.8,375.4 1843.0,375.4"/>
<polyline points="1665.8,428.0 1667.4,506.0 1653.0,507.7 1648.4,522.0 1639.0,531.5 1642.0,541.0 1632.6,550.5 1637.3,558.4 1629.4,566.3 1640.5,569.5 1645.2,591.7 1648.4,604.3 1662.7,628.0 1664.3,645.5 1681.7,655.0 1692.7,667.7 1708.6,693.0 1724.4,708.8 1729.0,721.5 1738.7,732.6 1751.3,734.0 1769.0,729.0"/>
<polyline points="1458.4,663.0 1684.8,663.0 1692.7,667.7"/>
<polyline points="1729.0,721.5 1712.0,719.0 1697.0,722.0 1681.7,721.5 1643.7,737.3 1610.4,732.6 1588.2,720.0 1574.0,732.6 1567.7,775.3 1555.0,829.0 1532.8,860.8 1523.3,889.3 1504.3,917.8 1496.4,905.0 1479.0,911.5 1466.3,908.3 1452.0,936.8"/>
<polyline points="1853.4,183.5 1863.0,209.5 1855.0,240.7 1888.0,312.0"/>
<polyline points="1869.0,183.0 1863.0,209.5"/>
<polyline points="1808.0,1309.0 1808.7,1353.0 1813.3,1369.3 1825.3,1370.0 1888.0,1405.0"/>
<polyline points="1862.7,1392.0 1854.7,1413.0"/>
</g>
<g stroke="#ffffff" stroke-opacity=".35" stroke-width="1"><line x1="664" y1="378" x2="1888" y2="378"/><line x1="664" y1="822" x2="1770" y2="822"/></g>
<g font-size="12" fill="#24384a" text-anchor="middle" stroke="#fff" stroke-opacity=".5" stroke-width="1.500" paint-order="stroke">
<text x="995.7" y="339.3" transform="rotate(-70 995.7 335.0)" textLength="29" lengthAdjust="spacingAndGlyphs">GCCC</text>
<text x="853.0" y="369.3" transform="rotate(45 853.0 365.0)" textLength="29" lengthAdjust="spacingAndGlyphs">GCCC</text>
<text x="1116.0" y="193.8" transform="rotate(-35 1116.0 189.5)">GMM</text>
<text x="1141.0" y="217.3" transform="rotate(-35 1141.0 213.0)" textLength="29" lengthAdjust="spacingAndGlyphs">DAAA</text>
<text x="1189.5" y="440.8" transform="rotate(90 1189.5 436.5)" textLength="29" lengthAdjust="spacingAndGlyphs">DRRR</text>
<text x="873.7" y="475.6" transform="rotate(90 873.7 471.3)" textLength="29" lengthAdjust="spacingAndGlyphs">GVSC</text>
<text x="694.8" y="504.1" transform="rotate(17 694.8 499.8)" textLength="29" lengthAdjust="spacingAndGlyphs">GVSC</text>
<text x="688.5" y="531.0" transform="rotate(17 688.5 526.7)" textLength="29" lengthAdjust="spacingAndGlyphs">GOOO</text>
<text x="1082.0" y="648.3" transform="rotate(-90 1082.0 644.0)" textLength="29" lengthAdjust="spacingAndGlyphs">GLRB</text>
<text x="1036.0" y="727.3" transform="rotate(45 1036.0 723.0)" textLength="29" lengthAdjust="spacingAndGlyphs">GLRB</text>
<text x="1332.0" y="729.0" transform="rotate(35 1332.0 724.7)" textLength="29" lengthAdjust="spacingAndGlyphs">DNKK</text>
<text x="1347.4" y="838.3" transform="rotate(90 1347.4 834.0)" textLength="29" lengthAdjust="spacingAndGlyphs">DGAC</text>
<text x="1177.0" y="939.3" transform="rotate(90 1177.0 935.0)" textLength="29" lengthAdjust="spacingAndGlyphs">GOOO</text>
<text x="1267.3" y="963.3" transform="rotate(-22 1267.3 959.0)" textLength="29" lengthAdjust="spacingAndGlyphs">DGAC</text>
<text x="1425.6" y="915.8" transform="rotate(-10 1425.6 911.5)" textLength="29" lengthAdjust="spacingAndGlyphs">FCCC</text>
<text x="1130.0" y="1050.8" transform="rotate(-22 1130.0 1046.5)" textLength="29" lengthAdjust="spacingAndGlyphs">FNAN</text>
<text x="1311.0" y="1171.7" transform="rotate(0 1311.0 1167.4)" textLength="29" lengthAdjust="spacingAndGlyphs">FNAN</text>
<text x="1512.0" y="364.8" transform="rotate(0 1512.0 360.5)" textLength="29" lengthAdjust="spacingAndGlyphs">HLLL</text>
<text x="1512.0" y="394.9" transform="rotate(0 1512.0 390.6)" textLength="29" lengthAdjust="spacingAndGlyphs">FTTT</text>
<text x="1800.4" y="364.8" transform="rotate(0 1800.4 360.5)" textLength="29" lengthAdjust="spacingAndGlyphs">HECC</text>
<text x="1800.4" y="394.9" transform="rotate(0 1800.4 390.6)" textLength="29" lengthAdjust="spacingAndGlyphs">HSSS</text>
<text x="1873.0" y="317.8" transform="rotate(60 1873.0 313.5)" textLength="29" lengthAdjust="spacingAndGlyphs">HECC</text>
<text x="1433.0" y="472.3" transform="rotate(90 1433.0 468.0)" textLength="29" lengthAdjust="spacingAndGlyphs">DRRR</text>
<text x="1572.4" y="653.0" transform="rotate(0 1572.4 648.7)" textLength="29" lengthAdjust="spacingAndGlyphs">FTTT</text>
<text x="1572.4" y="681.3" transform="rotate(0 1572.4 677.0)" textLength="29" lengthAdjust="spacingAndGlyphs">FCCC</text>
<text x="1582.0" y="941.1" transform="rotate(20 1582.0 936.8)" textLength="29" lengthAdjust="spacingAndGlyphs">FZZA</text>
<text x="1662.6" y="1011.8" transform="rotate(55 1662.6 1007.5)" textLength="29" lengthAdjust="spacingAndGlyphs">FZZA</text>
<text x="1716.5" y="1077.7" transform="rotate(0 1716.5 1073.4)" textLength="29" lengthAdjust="spacingAndGlyphs">FLFI</text>
<text x="1764.0" y="1030.8" transform="rotate(-70 1764.0 1026.5)" textLength="29" lengthAdjust="spacingAndGlyphs">FLFI</text>
<text x="1542.3" y="1405.3" transform="rotate(0 1542.3 1401.0)" textLength="29" lengthAdjust="spacingAndGlyphs">FAJA</text>
<text x="1522.0" y="1374.3" transform="rotate(0 1522.0 1370.0)" textLength="29" lengthAdjust="spacingAndGlyphs">FYWH</text>
<text x="1430.0" y="1294.3" transform="rotate(90 1430.0 1290.0)" textLength="29" lengthAdjust="spacingAndGlyphs">FYWH</text>
</g>
<text x="1052.600" y="208.500" font-size="20" fill="#aab0b6" fill-opacity=".75" stroke="#fff" stroke-opacity=".55" stroke-width="3" paint-order="stroke" textLength="74.400" lengthAdjust="spacingAndGlyphs">Morocco</text>
<g font-size="22" font-weight="bold" fill="#1f4562" stroke="#fff" stroke-width="2.500" stroke-opacity=".8" paint-order="stroke">
<text x="1265.700" y="621.500" textLength="76" lengthAdjust="spacingAndGlyphs">BCS082</text>
<text x="1745" y="1137.500" textLength="98" lengthAdjust="spacingAndGlyphs">MPH8342</text>
<text x="1774" y="779" textLength="96" lengthAdjust="spacingAndGlyphs" fill="#5d7c95">AVIO222</text>
</g>
<circle cx="1303" cy="665.400" r="3" fill="#16324a"/>
<text x="1374" y="224" font-size="19.500" fill="#27506d" stroke="#27506d" stroke-width=".55" textLength="502" lengthAdjust="spacingAndGlyphs">Powered by Leaflet | DTN | © OpenStreetMap contributors</text>
<rect x="1844" y="326" width="41" height="44.500" fill="#fff" fill-opacity=".86"/>
<rect x="1844" y="371.500" width="41" height="44" fill="#fff" fill-opacity=".86"/>
<path d="M1855 349.500h17M1863.500 341v17" stroke="#111" stroke-width="3"/>
<path d="M1855.500 394.500h16.500" stroke="#111" stroke-width="3"/>
<rect x="1767.500" y="428" width="120.500" height="882.500" fill="#fff" fill-opacity=".88"/>
<rect x="1767.500" y="1310" width="120.500" height="3" fill="#000" fill-opacity=".05"/>
<rect x="1803" y="493" width="6" height="751" rx="3" fill="#d6d6d6"/>
<rect x="1803" y="546" width="6" height="279" fill="#9fcde6"/>
<defs><filter id="ks" x="-50%" y="-50%" width="200%" height="200%"><feDropShadow dx="0" dy="2" stdDeviation="2.500" flood-color="#000" flood-opacity=".3"/></filter></defs>
<circle cx="1806" cy="545.500" r="16" fill="#fff" filter="url(#ks)"/>
<circle cx="1806" cy="824.500" r="16" fill="#fff" filter="url(#ks)"/>
<text x="1832" y="502.8" font-size="24.500" fill="#8a8a8a" textLength="36" lengthAdjust="spacingAndGlyphs">430</text>
<text x="1831.500" y="554.5" font-size="24.500" font-weight="bold" fill="#1f4562" textLength="40" lengthAdjust="spacingAndGlyphs">400</text>
<text x="1832" y="588.8" font-size="24.500" fill="#8a8a8a" textLength="36" lengthAdjust="spacingAndGlyphs">380</text>
<text x="1832" y="623.4" font-size="24.500" fill="#8a8a8a" textLength="36" lengthAdjust="spacingAndGlyphs">360</text>
<text x="1832" y="657.8" font-size="24.500" fill="#8a8a8a" textLength="36" lengthAdjust="spacingAndGlyphs">340</text>
<text x="1832" y="692.8" font-size="24.500" fill="#8a8a8a" textLength="36" lengthAdjust="spacingAndGlyphs">320</text>
<text x="1832" y="727.8" font-size="24.500" fill="#8a8a8a" textLength="36" lengthAdjust="spacingAndGlyphs">300</text>
<text x="1832" y="780.8" font-size="24.500" fill="#8a8a8a" textLength="36" lengthAdjust="spacingAndGlyphs">270</text>
<text x="1831.500" y="833.4" font-size="24.500" font-weight="bold" fill="#1f4562" textLength="40" lengthAdjust="spacingAndGlyphs">240</text>
<text x="1832" y="937.8" font-size="24.500" fill="#8a8a8a" textLength="36" lengthAdjust="spacingAndGlyphs">180</text>
<text x="1832" y="1006.8" font-size="24.500" fill="#8a8a8a" textLength="36" lengthAdjust="spacingAndGlyphs">140</text>
<text x="1832" y="1075.8" font-size="24.500" fill="#8a8a8a" textLength="36" lengthAdjust="spacingAndGlyphs">100</text>
<text x="1832" y="1110.8" font-size="24.500" fill="#8a8a8a" textLength="24" lengthAdjust="spacingAndGlyphs">80</text>
<text x="1832" y="1162.8" font-size="24.500" fill="#8a8a8a" textLength="24" lengthAdjust="spacingAndGlyphs">50</text>
<text x="1832" y="1197.8" font-size="24.500" fill="#8a8a8a" textLength="24" lengthAdjust="spacingAndGlyphs">30</text>
<text x="1832" y="1232.8" font-size="24.500" fill="#8a8a8a" textLength="24" lengthAdjust="spacingAndGlyphs">10</text>
<path d="M664 1267H1477.500V1215.500H1752V1397H664z" fill="#fff" fill-opacity=".93"/>
<rect x="664" y="1397" width="1088" height="4" fill="#000" fill-opacity=".06"/>
<rect x="664" y="1338.500" width="1056" height="5.500" rx="2.700" fill="#dcdcdc"/>
<text x="1493" y="1245.500" font-size="18.500" fill="#2b4a62" textLength="181" lengthAdjust="spacingAndGlyphs">SHOW CURRENT TIME</text>
<rect x="1684.500" y="1227" width="53" height="35" rx="17.500" fill="#3fb0e2"/>
<circle cx="1719.500" cy="1244.500" r="16.500" fill="#fff" filter="url(#ks)"/>
<text x="1657.500" y="1378.500" font-size="18.500" fill="#8b8b8b" textLength="92" lengthAdjust="spacingAndGlyphs">06 - 09:32</text>
<path d="M997.5 1338.0 c-10 -9 -19 -17 -19 -28.500 a19 19 0 0 1 38 0 c0 11.500 -9 19.500 -19 28.500z" fill="#d98a52"/>
<path d="M1129.3 1338.0 c-10 -9 -19 -17 -19 -28.500 a19 19 0 0 1 38 0 c0 11.500 -9 19.500 -19 28.500z" fill="#cb331d"/>
<path d="M997.500 1299.500l-8.500 14.500h17z" fill="none" stroke="#fff" stroke-width="1.600" stroke-linejoin="round"/><path d="M997.500 1305v4.500M997.500 1311v1.300" stroke="#fff" stroke-width="1.400"/>
<path d="M1129.300 1295c.9 0 1.500 .8 1.500 1.800v4.700l7.500 4.600v2l-7.500-2.300v4.700l2.200 1.600v1.500l-3.700-1-3.700 1v-1.500l2.200-1.600v-4.700l-7.500 2.300v-2l7.500-4.600v-4.700c0-1 .6-1.800 1.500-1.800z" fill="#fff"/>
</svg>

</div>
<div id="botstrip"></div>
<div style="position:absolute;right:0;top:0;width:3px;height:1341px;background:#dfe8f0"></div>
</div>
</body>
</html>
